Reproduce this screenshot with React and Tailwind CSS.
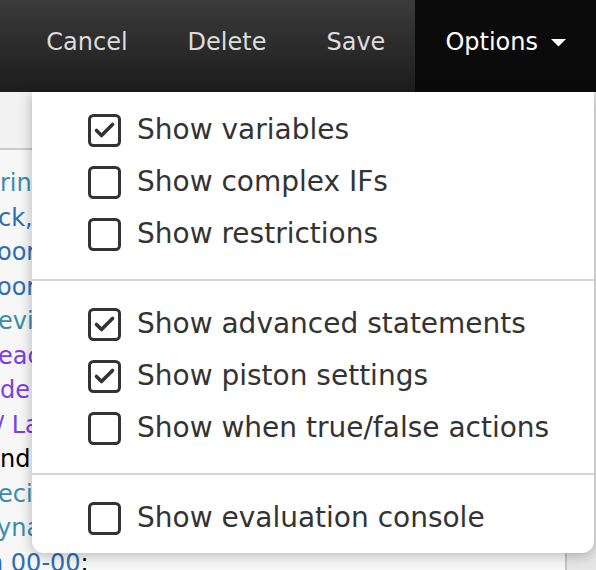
import React from "react";

const NAV = ["Cancel", "Delete", "Save"];

const OPTION_GROUPS = [
  [
    { label: "Show variables", checked: true },
    { label: "Show complex IFs", checked: false },
    { label: "Show restrictions", checked: false },
  ],
  [
    { label: "Show advanced statements", checked: true },
    { label: "Show piston settings", checked: true },
    { label: "Show when true/false actions", checked: false },
  ],
  [{ label: "Show evaluation console", checked: false }],
];

// bits of the piston code peeking out behind the menu
const CODE_LINES = [
  { ml: "ml-0", parts: [["ring", "text-[#3d8cab]"]] },
  { ml: "-ml-[2px]", parts: [["ck,", "text-[#2f6db5]"]] },
  { ml: "-ml-[3px]", parts: [["oor,", "text-[#2f6db5]"]] },
  { ml: "-ml-[3px]", parts: [["oor,", "text-[#2f6db5]"]] },
  { ml: "-ml-[2px]", parts: [["evic", "text-[#3d8cab]"]] },
  { ml: "-ml-[2px]", parts: [["eac", "text-[#7b3fe4]"]] },
  { ml: "ml-0", parts: [["de", "text-[#7b3fe4]"]] },
  { ml: "-ml-[4px]", parts: [["/ La", "text-[#7b3fe4]"]] },
  { ml: "ml-0", parts: [["nd ", "text-black"], ["I", "text-[#7b3fe4]"]] },
  { ml: "-ml-[2px]", parts: [["ecir", "text-[#3d8cab]"]] },
  { ml: "-ml-[3px]", parts: [["yna", "text-[#3d8cab]"]] },
  { ml: "-ml-[12px]", parts: [["n 00-00", "text-[#2f6db5]"], [":", "text-black"]] },
];

function Checkbox({ checked }) {
  return (
    <svg width="33" height="33" viewBox="0 0 33 33" className="shrink-0">
      <rect x="1.5" y="1.5" width="30" height="30" rx="4" fill="#fff" stroke="#333" strokeWidth="3" />
      {checked && (
        <path d="M8.5 16.5 L13.5 21.5 L24.5 10.5" fill="none" stroke="#333" strokeWidth="3.6" strokeLinecap="round" strokeLinejoin="round" />
      )}
    </svg>
  );
}

function OptionRow({ label, checked }) {
  return (
    <div className="flex items-center h-[52px] pl-[56px] gap-[16px]">
      <Checkbox checked={checked} />
      <span className="text-[28px] text-[#333] whitespace-nowrap leading-none">{label}</span>
    </div>
  );
}

export default function App() {
  return (
    <div
      className="relative w-[596px] h-[570px] overflow-hidden bg-[#f2f2f2]"
      style={{ fontFamily: '"DejaVu Sans", Verdana, sans-serif' }}
    >
      {/* top bar */}
      <nav className="h-[92px] flex justify-end bg-gradient-to-b from-[#3b3b3b] to-[#1d1d1d]">
        {NAV.map((n) => (
          <div key={n} className="flex items-center px-[30px] pb-[9px] text-[24px] text-[#dcdcdc]">
            {n}
          </div>
        ))}
        <div className="flex items-center px-[30px] pb-[9px] bg-[#0b0b0b] text-[24px] text-white">
          Options
          <svg width="15" height="8" viewBox="0 0 15 8" className="ml-[13px] mt-[3px]">
            <path d="M0 0 H15 L7.5 7.5 Z" fill="#fff" />
          </svg>
        </div>
      </nav>

      {/* page behind */}
      <div className="flex h-[478px]">
        <div className="w-[567px] border-r-2 border-[#c4c4c4] bg-[#f7f7f7]">
          <div className="h-[58px] border-b-2 border-[#cbcbcb] bg-[#f2f2f2]" />
          <div className="pt-[16px] text-[24px] leading-[34.5px] whitespace-nowrap">
            {CODE_LINES.map((l, i) => (
              <div key={i} className={l.ml}>
                {l.parts.map(([t, c], j) => (
                  <span key={j} className={c}>{t}</span>
                ))}
              </div>
            ))}
          </div>
        </div>
        <div className="flex-1 bg-[#e6e6e6]" />
      </div>

      {/* options dropdown */}
      <div className="absolute top-[92px] left-[32px] w-[562px] bg-white rounded-b-[12px] shadow-[0_2px_14px_rgba(0,0,0,0.28)] pt-[12px] pb-[9px]">
        {OPTION_GROUPS.map((g, gi) => (
          <div key={gi}>
            {gi > 0 && <div className="h-[2px] bg-[#d6d6d6] mt-[19px] mb-[17px]" />}
            {g.map((o) => (
              <OptionRow key={o.label} {...o} />
            ))}
          </div>
        ))}
      </div>
    </div>
  );
}
